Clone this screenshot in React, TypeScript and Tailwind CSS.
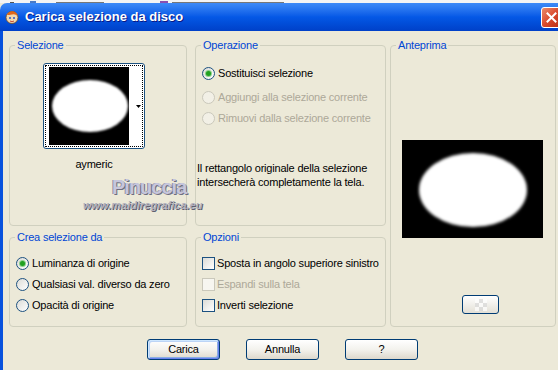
import React from 'react';

// Windows XP "Carica selezione da disco" dialog

function Radio({ checked = false, disabled = false }: { checked?: boolean; disabled?: boolean }) {
  return (
    <span
      className={`w-[13px] h-[13px] shrink-0 rounded-full border flex items-center justify-center ${
        disabled
          ? 'border-[#CAC8BB] bg-[#F2F0E6]'
          : 'border-[#1C5180] bg-linear-to-br from-[#DCDCD7] to-white'
      }`}
    >
      {checked && <span className="w-[5px] h-[5px] rounded-full bg-[#21A121] shadow-[0_0_0_1px_#8CD08C]" />}
    </span>
  );
}

function Check({ disabled = false }: { disabled?: boolean }) {
  return (
    <span
      className={`w-[13px] h-[13px] shrink-0 border ${
        disabled ? 'border-[#CAC8BB] bg-[#F7F6F0]' : 'border-[#1C5180] bg-linear-to-br from-[#DCDCD7] to-white'
      }`}
    />
  );
}

function Group({ label, className, children }: { label: string; className: string; children?: React.ReactNode }) {
  return (
    <fieldset className={`border border-[#D0D0BF] rounded-[4px] min-w-0 ${className}`}>
      <legend className="ml-[5px] px-[2px] leading-[13px] text-[#0046D5]">{label}</legend>
      {children}
    </fieldset>
  );
}

function Btn({ children, def = false }: { children: React.ReactNode; def?: boolean }) {
  return (
    <button
      type="button"
      className={`w-[73px] h-[21px] rounded-[3px] border border-[#003C74] bg-linear-to-b from-white via-[#F3F2ED] to-[#DDD8CC] text-black leading-none ${
        def
          ? 'shadow-[inset_1px_1px_0_#CEE7FF,inset_-1px_-1px_0_#6982EE,inset_2px_2px_0_#BCD4F6,inset_-2px_-2px_0_#89ADE4]'
          : ''
      }`}
    >
      {children}
    </button>
  );
}

function Ellipse({ w, h, cx, cy, rx, ry, blur, id }: { w: number; h: number; cx: number; cy: number; rx: number; ry: number; blur: number; id: string }) {
  return (
    <svg width={w} height={h} className="block">
      <defs>
        <filter id={id} x="-20%" y="-20%" width="140%" height="140%">
          <feGaussianBlur stdDeviation={blur} />
        </filter>
      </defs>
      <rect width={w} height={h} fill="#000" />
      <ellipse cx={cx} cy={cy} rx={rx} ry={ry} fill="#fff" filter={`url(#${id})`} />
    </svg>
  );
}

export default function App() {
  return (
    <div className="w-[558px] h-[370px] overflow-hidden relative bg-[#ECE9D8] font-['Liberation_Sans',Arial,sans-serif] text-[11px] tracking-[-0.2px] text-black">
      {/* strip of the window behind */}
      <div className="h-[3px] bg-[#F4F4F4] flex items-end">
        <span className="ml-[10px] w-[4px] h-[1px] bg-[#555]" />
        <span className="ml-[16px] w-[6px] h-[2px] bg-[#4A7BC8]" />
        <span className="ml-[20px] w-[48px] h-[1px] bg-[#777]" />
        <span className="ml-[56px] w-[8px] h-[2px] bg-[#8A4FB0]" />
        <span className="ml-[4px] w-[112px] h-[1px] bg-[#777]" />
      </div>

      {/* title bar */}
      <div className="h-[28px] rounded-tl-[7px] flex items-center bg-linear-to-b from-[#3D8AF7] via-[#0458E6] to-[#0040C8]">
        <svg width="16" height="16" viewBox="0 0 16 16" className="ml-[4px] shrink-0">
          <circle cx="8" cy="8.5" r="6" fill="#F3D9B0" stroke="#7A4A20" strokeWidth="0.8" />
          <path d="M3 6 Q5 1.5 10 2.5 Q13 3.5 13.5 7 Q11 4.5 8 5.5 Q5 6 3 6Z" fill="#E0661A" />
          <circle cx="6" cy="9" r="1" fill="#2A54C8" />
          <circle cx="10" cy="9" r="1" fill="#2A54C8" />
          <path d="M6 12 Q8 13.5 10 12" stroke="#C0392B" strokeWidth="0.9" fill="none" />
        </svg>
        <span className="ml-[5px] text-[13px] font-bold tracking-normal text-white [text-shadow:1px_1px_0_#0A1883]">
          Carica selezione da disco
        </span>
        <div className="flex-1" />
        <div className="w-[21px] h-[21px] mr-[-4px] rounded-[3px] border border-white bg-linear-to-br from-[#E98A6A] via-[#D9482C] to-[#B52E14] flex items-center justify-center">
          <svg width="11" height="11" viewBox="0 0 11 11">
            <path d="M1.5 1.5 L9.5 9.5 M9.5 1.5 L1.5 9.5" stroke="#fff" strokeWidth="2" strokeLinecap="square" />
          </svg>
        </div>
      </div>

      {/* client area */}
      <div className="h-[339px] border-l-[3px] border-[#0852DD] pl-[6px] pt-[8px]">
        <div className="flex">
          <div className="w-[178px] flex flex-col">
            <Group label="Selezione" className="h-[187px]">
              <div className="ml-[33px] mt-[11px] w-[102px] flex flex-col items-center">
                <div className="w-[102px] h-[86px] rounded-[3px] border border-[#1C5180] bg-white p-[1px]">
                  <div className="h-full border border-dotted border-black flex">
                    <div className="ml-[3px] mt-[1px]">
                      <Ellipse w={80} h={78} cx={41} cy={39} rx={38} ry={26} blur={1} id="thumb" />
                    </div>
                    <div className="flex-1 flex items-center justify-end pr-[1px]">
                      <svg width="5" height="3" viewBox="0 0 5 3">
                        <path d="M0 0 H5 L2.5 3Z" fill="#000" />
                      </svg>
                    </div>
                  </div>
                </div>
                <div className="mt-[9px] leading-[13px]">aymeric</div>
              </div>
            </Group>
            <Group label="Crea selezione da" className="h-[96px] mt-[5px]">
              <div className="ml-[6px] mt-[13px] flex flex-col gap-[8px] leading-[13px]">
                <div className="flex items-center gap-[3px]">
                  <Radio checked />
                  <span>Luminanza di origine</span>
                </div>
                <div className="flex items-center gap-[3px]">
                  <Radio />
                  <span>Qualsiasi val. diverso da zero</span>
                </div>
                <div className="flex items-center gap-[3px]">
                  <Radio />
                  <span>Opacità di origine</span>
                </div>
              </div>
            </Group>
          </div>

          <div className="w-[191px] ml-[8px] flex flex-col">
            <Group label="Operazione" className="h-[187px]">
              <div className="ml-[6px] leading-[13px]">
                <div className="mt-[15px] flex items-center gap-[3px]">
                  <Radio checked />
                  <span>Sostituisci selezione</span>
                </div>
                <div className="mt-[11px] flex items-center gap-[3px] text-[#ACA899]">
                  <Radio disabled />
                  <span>Aggiungi alla selezione corrente</span>
                </div>
                <div className="mt-[8px] flex items-center gap-[3px] text-[#ACA899]">
                  <Radio disabled />
                  <span>Rimuovi dalla selezione corrente</span>
                </div>
              </div>
              <p className="ml-[1px] mt-[36px] leading-[14px] whitespace-nowrap">
                Il rettangolo originale della selezione
                <br />
                intersecherà completamente la tela.
              </p>
            </Group>
            <Group label="Opzioni" className="h-[96px] mt-[5px]">
              <div className="ml-[6px] mt-[13px] flex flex-col gap-[8px] leading-[13px]">
                <div className="flex items-center gap-[2px]">
                  <Check />
                  <span>Sposta in angolo superiore sinistro</span>
                </div>
                <div className="flex items-center gap-[2px] text-[#ACA899]">
                  <Check disabled />
                  <span>Espandi sulla tela</span>
                </div>
                <div className="flex items-center gap-[2px]">
                  <Check />
                  <span>Inverti selezione</span>
                </div>
              </div>
            </Group>
          </div>

          <div className="w-[166px] ml-[4px]">
            <Group label="Anteprima" className="h-[288px]">
              <div className="ml-[11px] mt-[88px]">
                <Ellipse w={141} h={98} cx={71} cy={50} rx={54} ry={37} blur={1.5} id="prev" />
              </div>
              <button
                type="button"
                className="ml-[71px] mt-[57px] w-[37px] h-[19px] rounded-[3px] border border-[#003C74] bg-linear-to-b from-white to-[#E3E0D6] flex items-center justify-center"
              >
                <span className="grid grid-cols-3 w-[12px] h-[12px] opacity-70">
                  <span className="bg-white" />
                  <span className="bg-[#D8D8D8]" />
                  <span className="bg-white" />
                  <span className="bg-[#D8D8D8]" />
                  <span className="bg-white" />
                  <span className="bg-[#D8D8D8]" />
                  <span className="bg-white" />
                  <span className="bg-[#D8D8D8]" />
                  <span className="bg-white" />
                </span>
              </button>
            </Group>
          </div>
        </div>

        <div className="ml-[138px] mt-[12px] flex gap-[26px]">
          <Btn def>Carica</Btn>
          <Btn>Annulla</Btn>
          <Btn>?</Btn>
        </div>
      </div>

      {/* watermark */}
      <div className="absolute left-[112px] top-[172px] text-[20px] font-bold tracking-[-1px] text-[#C6C6DC] [text-shadow:1px_1px_0_#6E6E80,-1px_0_0_#9090A0]">
        Pinuccia
      </div>
      <div className="absolute left-[83px] top-[197px] text-[11px] font-bold italic tracking-normal text-[#B0B0BC] [text-shadow:1px_1px_0_#606070]">
        www.maidiregrafica.eu
      </div>
    </div>
  );
}
